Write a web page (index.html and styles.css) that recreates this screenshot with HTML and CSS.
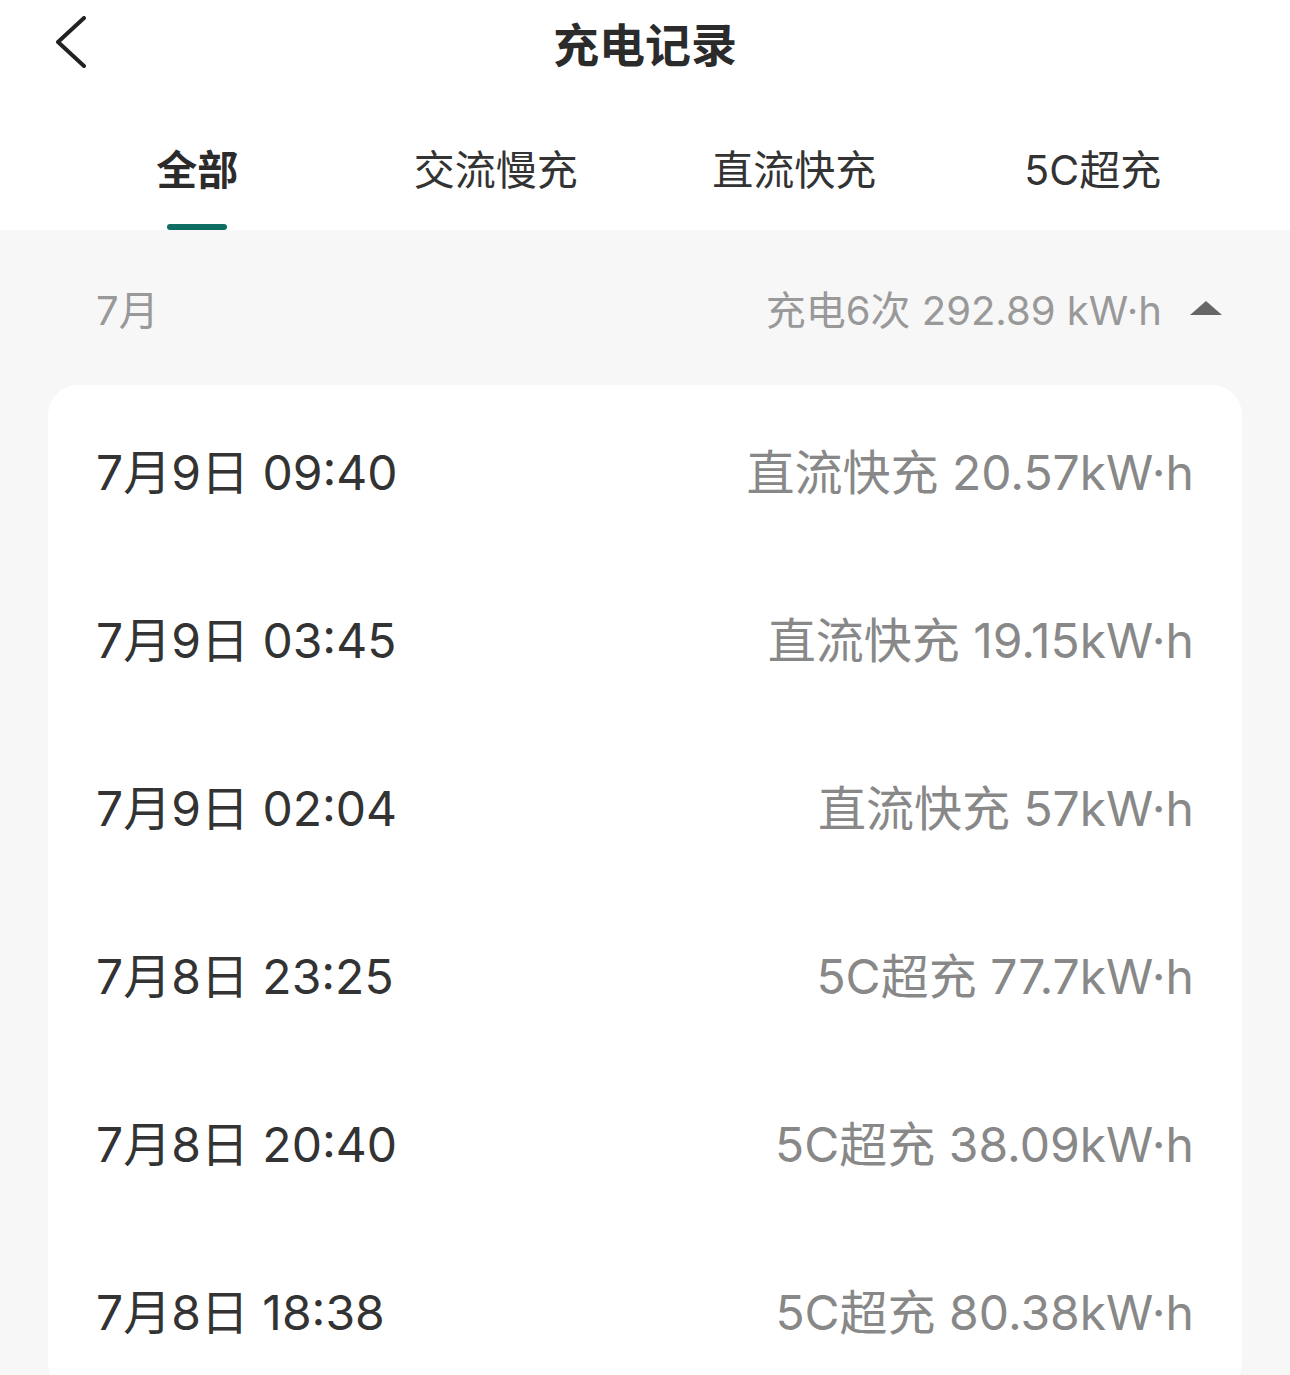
FILE: index.html
```html
<!DOCTYPE html>
<html lang="zh-CN">

<head>
	<meta charset="UTF-8">
	<meta name="viewport" content="width=device-width, initial-scale=1.0">
	<title>充电记录</title>
	<link rel="stylesheet" href="styles.css">
</head>

<body>
	<div class="header">
		<div class="title-bar">
			<button class="back-btn" aria-label="返回">
				<svg width="34" height="52" viewBox="0 0 34 52">
					<polyline points="30,2 4,26 30,50" fill="none" stroke="#222" stroke-width="4" stroke-linecap="round" stroke-linejoin="round" />
				</svg>
			</button>
			<h1 class="title">充电记录</h1>
		</div>
		<div class="tabs">
			<div class="tab active">全部</div>
			<div class="tab">交流慢充</div>
			<div class="tab">直流快充</div>
			<div class="tab">5C超充</div>
		</div>
	</div>

	<div class="content">
		<div class="month-row">
			<span class="month">7月</span>
			<span class="summary">充电6次 292.89 kW·h <span class="arrow"></span></span>
		</div>

		<div class="card">
			<div class="record">
				<span class="date">7月9日 09:40</span>
				<span class="info">直流快充 20.57kW·h</span>
			</div>
			<div class="record">
				<span class="date">7月9日 03:45</span>
				<span class="info">直流快充 19.15kW·h</span>
			</div>
			<div class="record">
				<span class="date">7月9日 02:04</span>
				<span class="info">直流快充 57kW·h</span>
			</div>
			<div class="record">
				<span class="date">7月8日 23:25</span>
				<span class="info">5C超充 77.7kW·h</span>
			</div>
			<div class="record">
				<span class="date">7月8日 20:40</span>
				<span class="info">5C超充 38.09kW·h</span>
			</div>
			<div class="record">
				<span class="date">7月8日 18:38</span>
				<span class="info">5C超充 80.38kW·h</span>
			</div>
		</div>
	</div>
</body>

</html>
```

FILE: styles.css
```css
body {
	margin: 0;
	padding: 0;
	background: #f7f7f7;
	font-family: Inter, "Noto Sans CJK SC", sans-serif;
	color: #333;
}

.header {
	background: #fff;
}

.title-bar {
	position: relative;
	height: 84px;
	display: flex;
	align-items: center;
	justify-content: center;
}

.back-btn {
	position: absolute;
	left: 54px;
	top: 16px;
	background: none;
	border: 0;
	padding: 0;
	cursor: pointer;
}

.title {
	margin: 0;
	font-size: 46px;
	font-weight: 700;
	color: #2b2b2b;
}

.tabs {
	display: grid;
	grid-template-columns: repeat(4, 1fr);
	padding: 0 48px;
	height: 146px;
}

.tab {
	position: relative;
	display: flex;
	align-items: center;
	justify-content: center;
	font-size: 41px;
	color: #333;
	padding-top: 20px;
}

.tab.active {
	font-weight: 700;
	color: #2b2b2b;
}

.tab.active::after {
	content: "";
	position: absolute;
	bottom: 0;
	left: 50%;
	width: 60px;
	height: 6px;
	margin-left: -30px;
	border-radius: 3px;
	background: #0f6e62;
}

.content {
	padding: 0 48px;
}

.month-row {
	display: flex;
	justify-content: space-between;
	align-items: center;
	height: 155px;
	padding: 0 20px 0 48px;
	color: #999;
	font-size: 40px;
}

.summary {
	display: flex;
	align-items: center;
}

.arrow {
	display: inline-block;
	width: 0;
	height: 0;
	margin-left: 28px;
	border-left: 16px solid transparent;
	border-right: 16px solid transparent;
	border-bottom: 14px solid #666;
}

.card {
	background: #fff;
	border-radius: 30px;
	padding: 0 48px;
}

.record {
	display: flex;
	justify-content: space-between;
	align-items: center;
	height: 168px;
	font-size: 48px;
}

.date {
	color: #333;
}

.info {
	color: #888;
}
```
